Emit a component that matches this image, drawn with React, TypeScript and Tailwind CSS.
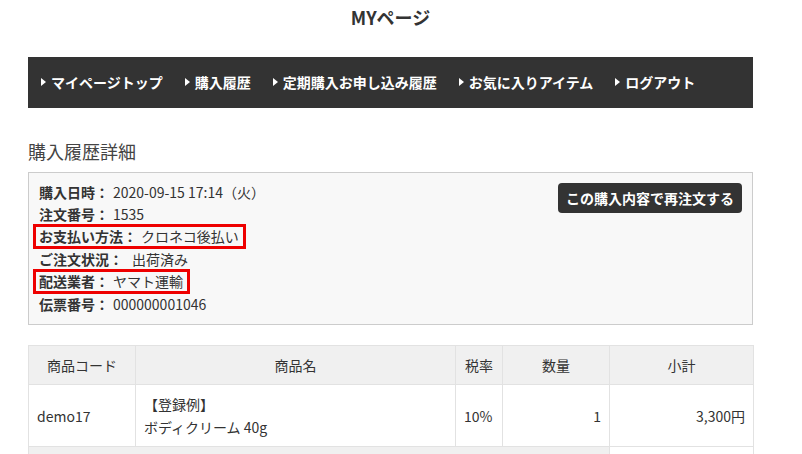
import React from "react"

const jp = { fontFamily: '"Noto Sans CJK JP", "Liberation Sans", sans-serif' }

type Row = { label: string; value: string; gap: string; marked?: boolean }

const orderRows: Row[] = [
    { label: "購入日時：", value: "2020-09-15 17:14（火）", gap: "ml-1" },
    { label: "注文番号：", value: "1535", gap: "ml-1" },
    { label: "お支払い方法：", value: "クロネコ後払い", gap: "ml-1", marked: true },
    { label: "ご注文状況：", value: "出荷済み", gap: "ml-[9px]" },
    { label: "配送業者：", value: "ヤマト運輸", gap: "ml-1", marked: true },
    { label: "伝票番号：", value: "000000001046", gap: "ml-1" },
]

const navItems = ["マイページトップ", "購入履歴", "定期購入お申し込み履歴", "お気に入りアイテム", "ログアウト"]

function NavArrow() {
    return <span className="inline-block w-0 h-0 border-y-[4px] border-y-transparent border-l-[5px] border-l-white mr-[5px]" />
}

function OrderRow({ row }: { row: Row }) {
    return (
        <div className="relative w-fit leading-[22.4px] whitespace-nowrap">
            <span className="font-bold">{row.label}</span>
            <span className={row.gap}>{row.value}</span>
            {/* annotation frame */}
            {row.marked && <span className="absolute -left-[6px] -right-[7px] -top-[1px] -bottom-[1px] border-[3px] border-[#ee0000] pointer-events-none" />}
        </div>
    )
}

export default function App() {
    return (
        <div className="w-[802px] h-[454px] overflow-hidden bg-white text-[#333] text-[14px]" style={jp}>
            <div className="ml-[28px] w-[725px]">
                <h1 className="pt-[3px] text-center text-[18px] font-bold leading-[28.8px]">MYページ</h1>

                <nav className="mt-[25px] h-[51px] bg-[#333] flex items-center pl-[13px] text-white font-bold text-[14px]">
                    {navItems.map(item =>
                        <a key={item} className="flex items-center mr-[22px] whitespace-nowrap">
                            <NavArrow />
                            {item}
                        </a>
                    )}
                </nav>

                <h2 className="mt-[29px] mb-[6px] text-[18px] leading-[28.8px] font-normal text-[#444]">購入履歴詳細</h2>

                <section className="border border-[#ccc] bg-[#f8f8f8] px-[10px] pt-[8px] pb-[9px] flex justify-between items-start">
                    <div>
                        {orderRows.map(row => <OrderRow key={row.label} row={row} />)}
                    </div>
                    <button className="mt-[2px] h-[30px] px-[8px] rounded-[4px] bg-[#333] text-white font-bold text-[14px] leading-[30px] whitespace-nowrap">
                        この購入内容で再注文する
                    </button>
                </section>

                <table className="mt-[20px] w-[725px] border-collapse table-fixed leading-[22.4px]">
                    <colgroup>
                        <col className="w-[107px]" />
                        <col className="w-[320px]" />
                        <col className="w-[47px]" />
                        <col className="w-[107px]" />
                        <col className="w-[144px]" />
                    </colgroup>
                    <thead>
                        <tr className="bg-[#f0f0f0]">
                            <th className="border border-[#e2e2e2] p-2 font-normal text-center">商品コード</th>
                            <th className="border border-[#e2e2e2] p-2 font-normal text-center">商品名</th>
                            <th className="border border-[#e2e2e2] p-2 font-normal text-center">税率</th>
                            <th className="border border-[#e2e2e2] p-2 font-normal text-center">数量</th>
                            <th className="border border-[#e2e2e2] p-2 font-normal text-center">小計</th>
                        </tr>
                    </thead>
                    <tbody>
                        <tr>
                            <td className="border border-[#e2e2e2] p-2 align-middle">demo17</td>
                            <td className="border border-[#e2e2e2] p-2 align-middle">【登録例】<br />ボディクリーム 40g</td>
                            <td className="border border-[#e2e2e2] p-2 align-middle">10%</td>
                            <td className="border border-[#e2e2e2] p-2 align-middle text-right">1</td>
                            <td className="border border-[#e2e2e2] p-2 align-middle text-right">3,300円</td>
                        </tr>
                        <tr className="h-[38px]">
                            <td colSpan={4} className="border border-[#e2e2e2] bg-[#f0f0f0] p-2"></td>
                            <td className="border border-[#e2e2e2] p-2"></td>
                        </tr>
                    </tbody>
                </table>
            </div>
        </div>
    )
}
